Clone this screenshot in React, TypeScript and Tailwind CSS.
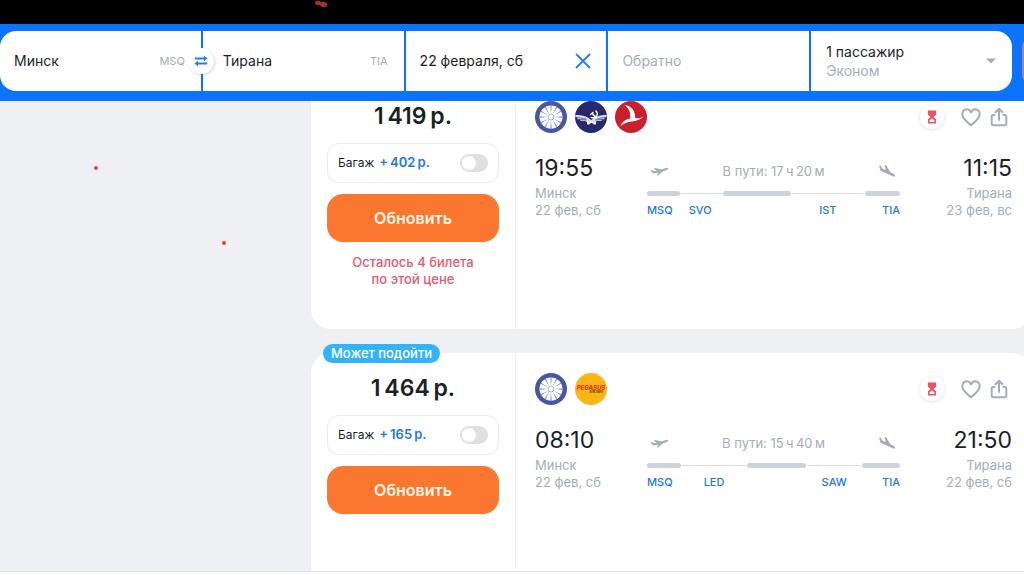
import type { ReactNode } from "react";
import clsx from "clsx";

type Leg = { time: string; city: string; date: string };

type Segment = { from: number; to: number };

type Stop = { code: string; at: number };

type Ticket = {
  id: string;
  badge?: string;
  price: string;
  baggage: string;
  remaining?: [string, string];
  airlines: ReactNode[];
  departure: Leg;
  arrival: Leg;
  duration: string;
  // positions along the route, in percent
  segments: Segment[];
  stops: Stop[];
};

const tickets: Ticket[] = [
  {
    id: "svo-ist",
    price: "1\u2009419\u2009р.",
    baggage: "+\u2009402\u2009р.",
    remaining: ["Осталось 4 билета", "по этой цене"],
    airlines: [
      <BelaviaLogo key="b2" />,
      <AeroflotLogo key="su" />,
      <TurkishLogo key="tk" />,
    ],
    departure: { time: "19:55", city: "Минск", date: "22 фев, сб" },
    arrival: { time: "11:15", city: "Тирана", date: "23 фев, вс" },
    duration: "В пути: 17\u2009ч\u200920\u2009м",
    segments: [
      { from: 0, to: 13 },
      { from: 30, to: 57 },
      { from: 86, to: 100 },
    ],
    stops: [
      { code: "SVO", at: 21 },
      { code: "IST", at: 71.5 },
    ],
  },
  {
    id: "led-saw",
    badge: "Может подойти",
    price: "1\u2009464\u2009р.",
    baggage: "+\u2009165\u2009р.",
    airlines: [<BelaviaLogo key="b2" />, <PegasusLogo key="pc" />],
    departure: { time: "08:10", city: "Минск", date: "22 фев, сб" },
    arrival: { time: "21:50", city: "Тирана", date: "22 фев, сб" },
    duration: "В пути: 15\u2009ч\u200940\u2009м",
    segments: [
      { from: 0, to: 13.5 },
      { from: 39.5, to: 63 },
      { from: 85, to: 100 },
    ],
    stops: [
      { code: "LED", at: 26.5 },
      { code: "SAW", at: 74 },
    ],
  },
];

export default function App() {
  return (
    <div className="relative flex h-screen flex-col overflow-hidden bg-[#eef0f4] font-['Inter','Liberation_Sans',sans-serif] text-[#1b1f27]">
      <div className="h-6 shrink-0 bg-black" />
      <SearchForm />
      <div className="flex min-h-0 flex-1 overflow-hidden">
        <aside className="w-[311px] shrink-0" />
        <main className="-mt-5 -mr-2 flex flex-1 flex-col gap-6">
          {tickets.map((ticket) => (
            <TicketCard key={ticket.id} ticket={ticket} />
          ))}
        </main>
      </div>
      <div className="h-1 shrink-0 border-t border-[#dfe1e5] bg-white" />
      <Marks />
    </div>
  );
}

function SearchForm() {
  const input =
    "w-full min-w-0 bg-transparent text-sm outline-none placeholder:text-[#a5adba]";

  return (
    <form
      className="relative z-10 flex shrink-0 items-center gap-[10px] overflow-hidden bg-[#0c73fe] pt-[7px] pb-[10px]"
      onSubmit={(event) => event.preventDefault()}
    >
      <div className="grid h-[60px] flex-1 grid-cols-5 gap-[2px]">
        <div className="relative flex items-center rounded-l-[16px] bg-white pr-4 pl-[14px]">
          <input
            aria-label="Откуда"
            className={input}
            defaultValue="Минск"
          />
          <span className="text-[11px] text-[#a5adba]">MSQ</span>
          <button
            type="button"
            aria-label="Поменять местами"
            className="absolute top-[17px] -right-[13px] z-10 flex size-[26px] items-center justify-center rounded-full bg-white shadow-[1px_1px_3px_rgba(0,0,0,0.16)]"
          >
            <SwapIcon />
          </button>
        </div>
        <div className="flex items-center bg-white pr-4 pl-5">
          <input aria-label="Куда" className={input} defaultValue="Тирана" />
          <span className="text-[11px] text-[#a5adba]">TIA</span>
        </div>
        <div className="flex items-center bg-white pr-[14px] pl-[14px]">
          <input
            aria-label="Когда"
            className={input}
            defaultValue="22 февраля, сб"
          />
          <button type="button" aria-label="Очистить дату">
            <svg
              viewBox="0 0 18 18"
              className="size-[18px] text-[#2a7cf0]"
              fill="none"
              stroke="currentColor"
              strokeWidth="1.8"
              strokeLinecap="round"
            >
              <path d="M2.5 2.5l13 13M15.5 2.5l-13 13" />
            </svg>
          </button>
        </div>
        <div className="flex items-center bg-white px-[14px]">
          <input
            aria-label="Обратно"
            className={input}
            placeholder="Обратно"
          />
        </div>
        <button
          type="button"
          className="flex items-center justify-between rounded-r-[16px] bg-white pr-4 pl-[15px] text-left text-sm"
        >
          <span className="flex flex-col leading-[19px]">
            <span>1 пассажир</span>
            <span className="text-[#a5adba]">Эконом</span>
          </span>
          <svg viewBox="0 0 10 6" className="h-[6px] w-[10px] text-[#a5adba]">
            <path d="M0 .5h10L5 5.5z" fill="currentColor" />
          </svg>
        </button>
      </div>
      <button
        type="submit"
        aria-label="Найти билеты"
        className="-mr-[158px] h-11 w-40 shrink-0 rounded-lg bg-[#c77480]"
      />
    </form>
  );
}

function TicketCard({ ticket }: { ticket: Ticket }) {
  return (
    <article className="relative flex h-[248px] shrink-0 rounded-[20px] bg-white">
      {ticket.badge && (
        <span className="absolute -top-[9px] left-3 flex h-[19px] items-center rounded-full bg-[#35b2fc] px-2 text-[13px] font-medium text-white">
          {ticket.badge}
        </span>
      )}
      <div className="flex w-[205px] shrink-0 flex-col border-r border-[#f1f2f4] px-4 pt-[19px] text-center">
        <p className="text-[23px] leading-8 font-semibold">{ticket.price}</p>
        <label className="mt-[11px] flex h-10 items-center rounded-xl border border-[#e9eaed] px-[10px] text-xs">
          Багаж
          <span className="ml-[5px] text-[13px] font-semibold text-[#2477e3]">
            {ticket.baggage}
          </span>
          <input
            type="checkbox"
            role="switch"
            className="ml-auto h-[18px] w-7 appearance-none rounded-full bg-[#dfe0e4] before:m-[2px] before:block before:size-[14px] before:rounded-full before:bg-white checked:bg-[#2477e3] checked:before:ml-3"
          />
        </label>
        <button
          type="button"
          className="mt-[11px] h-12 rounded-[16px] bg-[#fb762f] text-base font-semibold text-[#fff6e8]"
        >
          Обновить
        </button>
        {ticket.remaining && (
          <p className="mt-3 text-[13px] leading-[17px] font-medium text-[#e5596e]">
            {ticket.remaining[0]}
            <br />
            {ticket.remaining[1]}
          </p>
        )}
      </div>
      <div className="flex-1 pt-5 pr-5 pl-[19px]">
        <div className="flex items-center">
          <div className="flex gap-2">{ticket.airlines}</div>
          <div className="mr-1 ml-auto flex items-center text-[#a3abb8]">
            <span className="mr-4 flex size-6 items-center justify-center rounded-full bg-white shadow-[0_1px_4px_rgba(0,0,0,0.12)]">
              <HourglassIcon />
            </span>
            <button type="button" aria-label="В избранное">
              <HeartIcon />
            </button>
            <button type="button" aria-label="Поделиться" className="ml-2">
              <ShareIcon />
            </button>
          </div>
        </div>
        <div className="mt-[18px] flex">
          <LegInfo leg={ticket.departure} className="w-28" />
          <Route ticket={ticket} />
          <LegInfo leg={ticket.arrival} className="w-28 text-right" />
        </div>
      </div>
    </article>
  );
}

function LegInfo({ leg, className }: { leg: Leg; className: string }) {
  return (
    <div
      className={clsx(
        "shrink-0 text-[13px] leading-[17px] text-[#a5adba]",
        className,
      )}
    >
      <p className="text-[23px] leading-[34px] text-[#1b1f27]">{leg.time}</p>
      <p>{leg.city}</p>
      <p>{leg.date}</p>
    </div>
  );
}

function Route({ ticket }: { ticket: Ticket }) {
  return (
    <div className="min-w-0 flex-1 pt-[10px]">
      <div className="flex items-center justify-between pr-1 pl-[2px] text-[13px] text-[#a5adba]">
        <PlaneIcon landing={false} />
        <span className="h-5 leading-5">{ticket.duration}</span>
        <PlaneIcon landing />
      </div>
      <div className="relative mt-[10px] h-[5px]">
        <div className="absolute inset-x-0 top-[2px] h-px bg-[#d9dde3]" />
        {ticket.segments.map((segment) => (
          <span
            key={segment.from}
            className="absolute top-0 h-[5px] rounded-full bg-[#cdd2db] ring-1 ring-white"
            style={{
              left: `${segment.from}%`,
              width: `${segment.to - segment.from}%`,
            }}
          />
        ))}
      </div>
      <div className="relative mt-[6px] flex justify-between text-[11px] leading-4 font-medium text-[#2477e3]">
        <span>MSQ</span>
        {ticket.stops.map((stop) => (
          <span
            key={stop.code}
            className="absolute -translate-x-1/2"
            style={{ left: `${stop.at}%` }}
          >
            {stop.code}
          </span>
        ))}
        <span>TIA</span>
      </div>
    </div>
  );
}

function SwapIcon() {
  return (
    <svg viewBox="0 0 14 12" className="h-3 w-[14px] text-[#2a7ce8]">
      <path
        d="M.8 3.5h10.500M2.700 8.500h10.500"
        stroke="currentColor"
        strokeWidth="2"
      />
      <path d="M10 .8l3.600 2.700L10 6.200zM4 5.800L.4 8.500 4 11.200z" fill="currentColor" />
    </svg>
  );
}

function HourglassIcon() {
  return (
    <svg viewBox="0 0 10 14" className="h-[14px] w-[10px] text-[#f04f63]">
      <path
        d="M1 .5h8v4.300L6.500 7 9 9.300v4.200H1V9.300L3.500 7 1 4.800z"
        fill="currentColor"
      />
      <path d="M5 8.200l2.500 2.200v1.700h-5v-1.700z" fill="#fff" />
    </svg>
  );
}

function HeartIcon() {
  return (
    <svg viewBox="0 0 22 20" className="h-5 w-[22px]" fill="none">
      <path
        d="M11 18.200C7.500 15.400 2.300 11.600 2.300 7.200 2.300 4.300 4.200 2.300 6.600 2.300c2 0 3.500 1.100 4.400 3 .9-1.900 2.400-3 4.400-3 2.400 0 4.300 2 4.300 4.900 0 4.400-5.200 8.200-8.700 11z"
        stroke="currentColor"
        strokeWidth="2"
        strokeLinejoin="round"
      />
    </svg>
  );
}

function ShareIcon() {
  return (
    <svg
      viewBox="0 0 18 20"
      className="h-5 w-[18px]"
      fill="none"
      stroke="currentColor"
      strokeWidth="2"
      strokeLinecap="round"
      strokeLinejoin="round"
    >
      <path d="M4.500 8H3.200A1.500 1.500 0 0 0 1.700 9.500v7.200A1.500 1.500 0 0 0 3.200 18.200h11.600a1.500 1.500 0 0 0 1.500-1.500V9.500A1.500 1.500 0 0 0 14.800 8H13.500" />
      <path d="M9 13V2M5.500 5.200L9 1.700l3.500 3.500" />
    </svg>
  );
}

function PlaneIcon({ landing }: { landing: boolean }) {
  if (landing) {
    return (
      <svg viewBox="0 0 18 16" className="h-4 w-[18px] text-[#a3abb8]">
        <path
          d="M1.200 2.200l1.300.4 1.800 2.900 3.500 1.700L6.700 1.700l1.500.5 4.100 7 3.600 1.900c1 .6 1.300 1.400.9 2.100-.4.600-1.300.5-2.300 0L3.900 8.300C2.600 7.500 2 6.700 1.800 5.700z"
          fill="currentColor"
        />
      </svg>
    );
  }

  return (
    <svg viewBox="0 0 20 12" className="h-3 w-5 text-[#a3abb8]">
      <path
        d="M1.300 5.200l1.300-.2 2.300 1.200 2.800-.6-3-2.300 1.500-.4 6.300 1.500 4.300-1.400c1.200-.4 2.200-.2 2.400.4.200.6-.5 1.100-1.500 1.500l-3.900 1.500-4.600 3.900-1.700.5 1.800-3.300-3.400.8c-1.100.2-1.900.1-2.600-.6z"
        fill="currentColor"
      />
    </svg>
  );
}

function BelaviaLogo() {
  return (
    <svg viewBox="0 0 32 32" className="size-8">
      <circle cx="16" cy="16" r="16" fill="#4a569f" />
      <circle cx="16" cy="16" r="11.500" fill="#fff" />
      {Array.from({ length: 12 }, (_, i) => (
        <path
          key={i}
          d="M16 13L15.300 4.500h1.400z"
          fill="#8791c0"
          transform={`rotate(${i * 30} 16 16)`}
        />
      ))}
      <circle cx="16" cy="16" r="3" fill="#fff" stroke="#aab1d3" />
    </svg>
  );
}

function AeroflotLogo() {
  return (
    <svg viewBox="0 0 32 32" className="size-8">
      <circle cx="16" cy="16" r="16" fill="#29286f" />
      <path
        d="M.2 14c5-.4 9 .5 13 2.700l3 2.300 3-2.300c4-2.200 8-3.100 12.600-2.700l-.5 2.400h-1.500l-.5 1.800h-2l-.8 1.500-4.500.3-2 1.300h-8l-2-1.300-4.500-.3-.8-1.500h-2l-.5-1.800H.5z"
        fill="#dedeeb"
      />
      <path
        d="M1 16.200l10 1.800M4 18.300l8 .7M31 16.200L21 18M28 18.300l-8 .7"
        stroke="#29286f"
        strokeWidth=".6"
      />
      <path
        d="M20.500 9.500c4 3.800.5 8.500-4.800 6.800M17 12.200l5 5.500M15.300 13.700l3.200-2.700M14 22.500l2.500-1.500 2.500 1.500"
        fill="none"
        stroke="#fff"
        strokeWidth="1.400"
      />
      <path d="M12 21h2.500v2.500H12zM18.500 21H21v2.500h-2.500z" fill="#fff" />
    </svg>
  );
}

function TurkishLogo() {
  return (
    <svg viewBox="0 0 32 32" className="size-8">
      <circle cx="16" cy="16" r="16" fill="#c9202b" />
      <path
        d="M9.500 3.800C16 5 20.500 9.500 20.200 17.200c3.200.1 5.500-.5 8.300-1.300-4.500 3.200-9 4.200-13.500 4.900-3.300.5-6.300 1.700-9.800 4.400 1.800-4 5.200-6.800 10-7.600.5-5.800-1-10-5.700-13.800z"
        fill="#fff"
      />
    </svg>
  );
}

function PegasusLogo() {
  return (
    <span className="flex size-8 flex-col items-center justify-center rounded-full bg-[#fcb515] italic">
      <span className="text-[6px] leading-[6px] font-extrabold text-[#d93a22]">
        PEGASUS
      </span>
      <span className="mr-1 self-end text-[3px] leading-[3px] font-bold text-[#4b4220]">
        AIRLINES
      </span>
    </span>
  );
}

// hand-drawn dots lying over the page
function Marks() {
  return (
    <div className="pointer-events-none absolute inset-0 z-20">
      <span className="absolute top-[1px] left-[315px] h-1 w-[6px] rounded-full bg-[#b02d2d]" />
      <span className="absolute top-[2px] left-[320px] h-[5px] w-[7px] rotate-12 rounded-full bg-[#b02d2d]" />
      <span className="absolute top-[166px] left-[94px] size-1 rounded-full bg-[#e0413f]" />
      <span className="absolute top-[241px] left-[222px] size-1 rounded-full bg-[#e0413f]" />
    </div>
  );
}
